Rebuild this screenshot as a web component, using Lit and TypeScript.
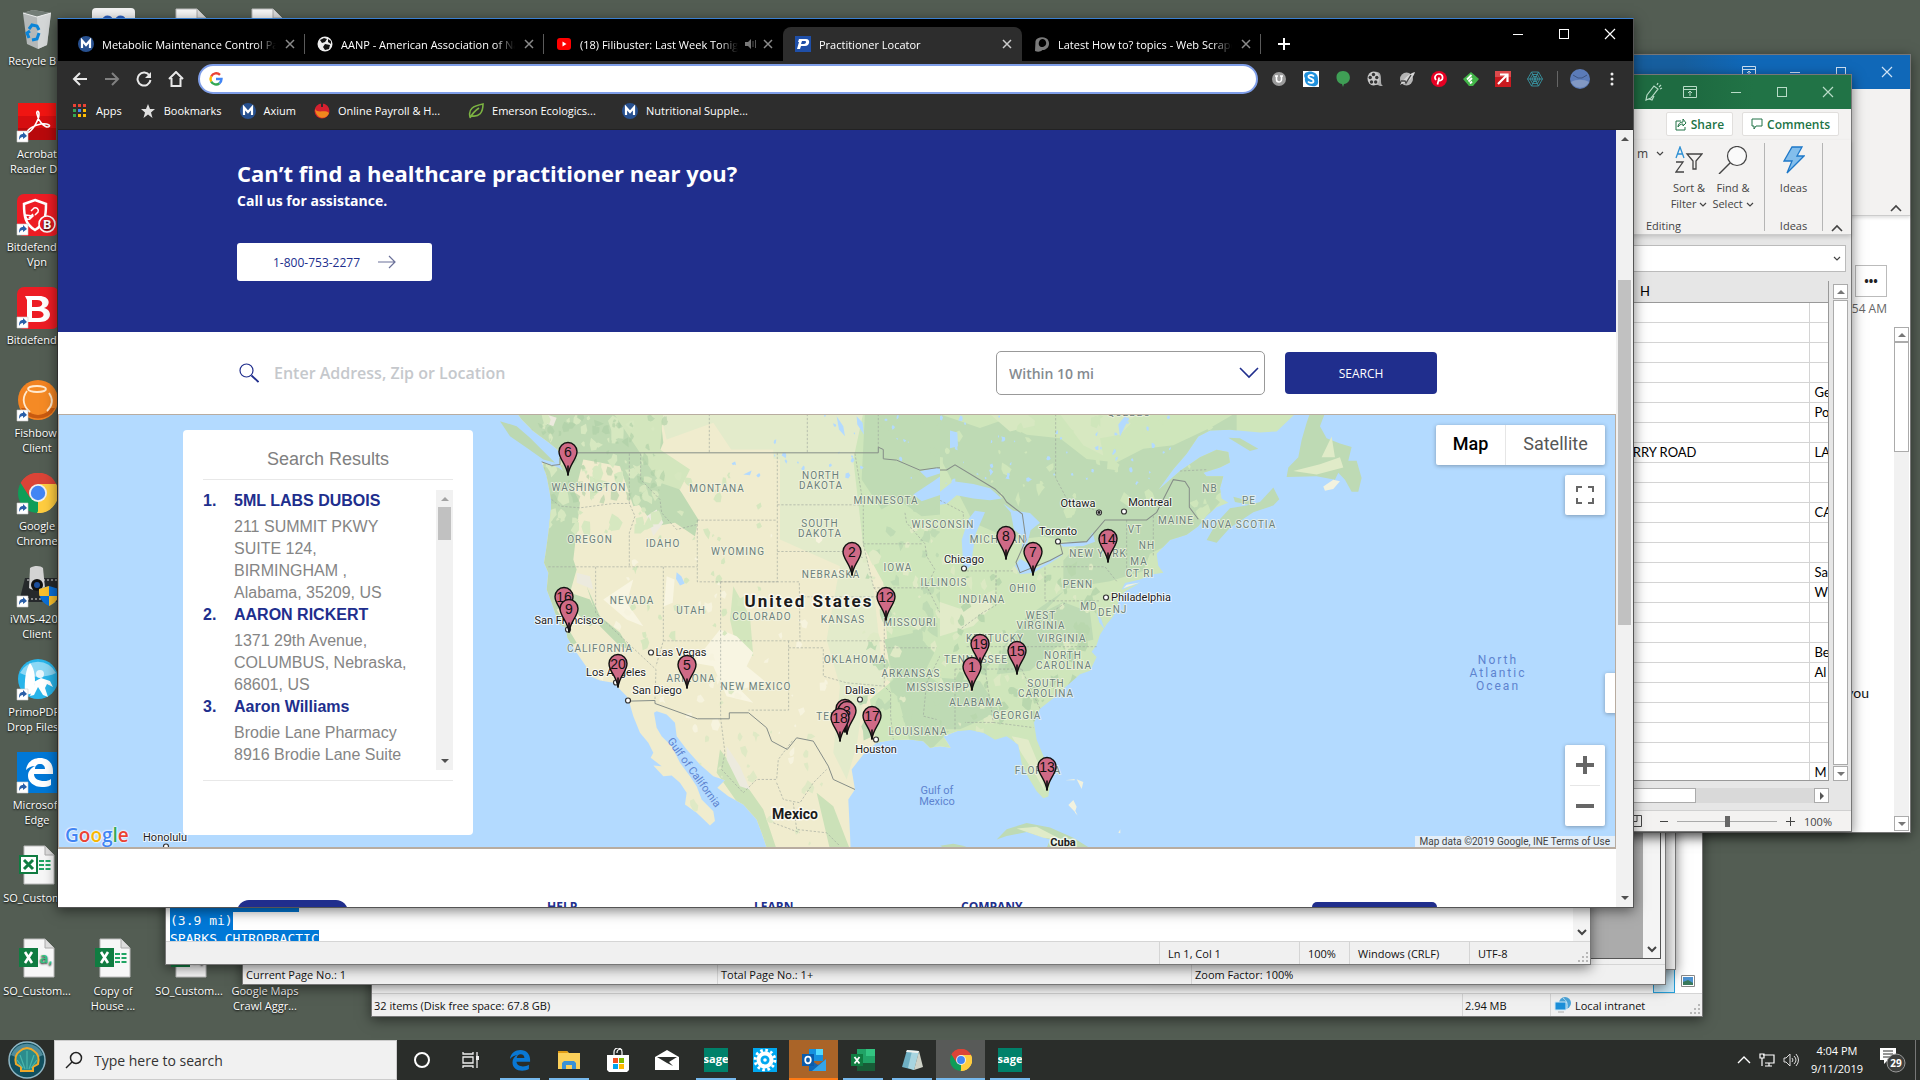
import { LitElement, html, svg, css } from "lit";
import { customElement } from "lit/decorators.js";

/* ---------- shared icon helper ---------- */
const icon = (w: number, h: number, body: unknown, cls = "") =>
  html`<svg class=${cls} width=${w} height=${h} viewBox="0 0 ${w} ${h}" aria-hidden="true" fill="none">${body}</svg>`;

const chevron = (dir: "up" | "down", c = "#444") =>
  icon(12, 8, dir === "down"
    ? svg`<path d="M2 2l4 4 4-4" stroke=${c} stroke-width="2"/>`
    : svg`<path d="M1 7l5-5 5 5" stroke=${c} stroke-width="1.6"/>`);
const tri = (dir: "up" | "down" | "right", c = "#505050") =>
  icon(8, 8, dir === "up" ? svg`<path d="M0 6l4-4 4 4z" fill=${c}/>`
    : dir === "down" ? svg`<path d="M0 2l4 4 4-4z" fill=${c}/>` : svg`<path d="M2 0l4 4-4 4z" fill=${c}/>`);

const winMin = icon(12, 12, svg`<path d="M1 6.500h10" stroke="currentColor"/>`);
const winMax = icon(12, 12, svg`<rect x="1.500" y="1.500" width="9" height="9" stroke="currentColor"/>`);
const winClose = icon(12, 12, svg`<path d="M1 1l10 10M11 1L1 11" stroke="currentColor" stroke-width="1.200"/>`);
const ribbonToggle = icon(14, 12, svg`<path d="M.5.5h13v11H.5zM.5 3.500h13M7 10V5M5 7l2-2 2 2" stroke="currentColor"/>`);
const grip = icon(12, 12, svg`<path d="M9 1h2v2H9zM5 5h2v2H5zM9 5h2v2H9zM1 9h2v2H1zM5 9h2v2H5zM9 9h2v2H9z" fill="#b8b8b8"/>`, "grip");

const mLogo = icon(16, 16, svg`<circle cx="8" cy="8" r="8" fill="#27508f"/><path d="M4 12V4.500L8 9l4-4.500V12" stroke="#fff" stroke-width="2.200"/>`);
const googleG = icon(16, 16, svg`
  <path d="M12 3.800A5.500 5.500 0 0 0 3.200 5.400" stroke="#ea4335" stroke-width="2.400"/>
  <path d="M3.200 5.400a5.500 5.500 0 0 0 0 5.200" stroke="#fbbc05" stroke-width="2.400"/>
  <path d="M3.200 10.600a5.500 5.500 0 0 0 8.300 1.600" stroke="#34a853" stroke-width="2.400"/>
  <path d="M11.500 12.200A5.500 5.500 0 0 0 13.500 8H8" stroke="#4285f4" stroke-width="2.400"/>`);

const chromeLogo = (s: number) => html`<svg width=${s} height=${s} viewBox="0 0 40 40" aria-hidden="true">
  <path d="M20 20L2.700 10A20 20 0 0 1 37.300 10z" fill="#db4437"/>
  <path d="M20 20L37.300 10A20 20 0 0 1 20 40z" fill="#ffcd40"/>
  <path d="M20 20L20 40A20 20 0 0 1 2.700 10z" fill="#0f9d58"/>
  <path d="M20 11h18.200A20 20 0 0 0 2.700 10l9.500 15z" fill="#db4437"/>
  <path d="M27.800 24.500L19 40A20 20 0 0 0 38.200 11H20z" fill="#ffcd40"/>
  <circle cx="20" cy="20" r="9" fill="#f1f1f1"/><circle cx="20" cy="20" r="7.200" fill="#4285f4"/></svg>`;
const edgeLogo = (s: number, c: string) => html`<svg width=${s} height=${s} viewBox="0 0 24 24" aria-hidden="true">
  <path d="M1 11C2 4 7 1 12.500 1 19 1 23 5.500 23 11.500V14H8.200c.2 3.600 3.600 5 7 5 2.500 0 4.600-.6 6.500-1.800v4.600C19.800 23 17 23.600 14.400 23.600 8 23.600 3.800 20 3.800 14.600c0-3.600 2-6.400 5.400-8C6 7 3 8.500 1 11zM8.400 9.800h8.400c0-2.600-1.500-4.200-4-4.200S8.700 7.300 8.400 9.800z" fill=${c}/></svg>`;

/* ---------- desktop shortcuts ---------- */
const sheet = svg`<path d="M9 1h21l9 9v29H9z" fill="#f7f7f7" stroke="#bbb"/><path d="M30 1v9h9" fill="#ddd" stroke="#aaa"/>`;
const art: Record<string, unknown> = {
  bin: svg`<path d="M8 5l10-3 18 3-4 32-9 4-11-5z" fill="#b4b8b8"/><path d="M8 5l14 4 14-4-18-3z" fill="#737d77"/><path d="M22 9l1 32 9-4 4-32z" fill="#d4d7d7"/><path d="M8 5l14 4 14-4" stroke="#eceeee" fill="none"/><path d="M14 21l3-4 5 1 2 4M24 25l-2 6-5 1M14 30l-2-5 3-2" stroke="#0a84d8" stroke-width="3" fill="none"/>`,
  acrobat: svg`<path d="M3 2h38v37H3z" fill="#b8090c"/><path d="M3 2h38v13H3z" fill="#f01512"/><path d="M3 15h38v12H3z" fill="#d60e10"/><path d="M12 32c5-1 12-13 12-19 0-4-3-3-2 0 1 7 7 13 11 13 4-1 0-4-7-3-6 1-14 5-14 9z" fill="none" stroke="#fff" stroke-width="1.600"/>`,
  vpn: svg`<rect x="2" width="42" height="42" rx="7" fill="#ed1c24"/><path d="M20 6l11 4c0 12-1 20-11 26C10 30 9 22 9 10z" fill="none" stroke="#fff" stroke-width="2.500"/><path d="M14 24l4-4m-2-3l3-3a3 3 0 0 1 4 4l-3 3m-2 1l-3 3a3 3 0 0 1-4-4z" stroke="#fff" stroke-width="1.500" fill="none"/><circle cx="32" cy="30" r="8" fill="#ed1c24" stroke="#fff" stroke-width="1.600"/><text x="32" y="35" text-anchor="middle" font-size="13" font-weight="700" fill="#fff">B</text>`,
  bit: svg`<rect x="2" width="42" height="42" rx="7" fill="#ed1c24"/><path fill-rule="evenodd" d="M10 9h14c12 0 12 10 5 12 9 2 8 14-4 14H12V13zM17 13v7h5c7 0 7-7 0-7zM17 24v7h6c8 0 7-7 0-7z" fill="#fff"/>`,
  fish: svg`<circle cx="23" cy="20" r="20" fill="#f28322"/><path d="M6 28a19 19 0 0 0 34 0z" fill="#c85a10"/><circle cx="23" cy="20" r="15" fill="#f58a25"/><ellipse cx="22" cy="9" rx="9" ry="3" fill="none" stroke="#ffe9cf" stroke-width="1.800"/><path d="M12 11c-6 8-3 16 3 21M34 13c5 7 3 13-2 18" fill="none" stroke="#ffe9cf" stroke-width="1.800"/>`,
  ivms: svg`<path d="M10 12h36v24H4z" fill="#26292b"/><path d="M12 14h34M8 33h34" stroke="#ddd" stroke-dasharray="2 2"/><path d="M15 2c5-3 11-2 13 0l2 20c-4 3-12 3-16 0z" fill="#d3d3d3"/><circle cx="22" cy="19" r="6" fill="#111"/><circle cx="22" cy="19" r="3" fill="#1b4e9c"/><path d="M34 20l10 3c0 9-3 14-10 17-7-3-10-8-10-17z" fill="#0b6fd6"/><path d="M34 20v10H24.500c-.5-2-.5-4-.5-7zM34 30h9.400c-1 5-5 8-9.400 10z" fill="#fbc02d"/>`,
  primo: svg`<circle cx="23" cy="20" r="20" fill="#29b5ea"/><path d="M5 14a20 20 0 0 1 36 0c-10 5-26 5-36 0z" fill="#8dd8f5"/><path d="M10 36C9 20 11 10 15 4c5 6 6 16 4 30z" fill="#fff"/><circle cx="25" cy="15" r="4" fill="#e9f7fd"/><path d="M17 24l9-5 9 3 3 6-6-3-2 4 3 9-5-2-5-8-4 8-4 1 5-13z" fill="#fff"/>`,
  edge: svg`<path d="M2 0h44v41H2z" fill="#0078d7"/><path d="M11 18C12 10 18 6 25 6c8 0 13 5 13 13v3H19c0 5 5 7 10 7 3 0 5-.6 7-2v6c-3 2-6 2-9 2-8 0-14-5-14-11 0-5 3-8 7-10-4 0-7 2-9 4zM20 17h10c0-3-2-5-5-5s-5 2-5 5z" fill="#fff"/>`,
  white: svg`<rect x="1" width="43" height="40" rx="4" fill="#f2f2f2"/><path d="M12 14c2-6 8-6 8 0M25 14c2-6 8-6 8 0" stroke="#2b5fc0" stroke-width="4" fill="none"/>`,
  file: sheet,
  xls: svg`${sheet}<path d="M24 16h12M24 20h12M24 24h12" stroke="#1fa463" stroke-width="2" stroke-dasharray="5 1.500"/><rect x="5" y="11" width="17" height="17" fill="#fff" stroke="#107c41" stroke-width="2"/><path d="M9 15l9 9M18 15l-9 9" stroke="#107c41" stroke-width="3"/>`,
  csv: svg`${sheet}<text x="31" y="25" text-anchor="middle" font-size="15" font-weight="600" fill="#33c481">a,</text><path d="M4 10h19v19H4z" fill="#107c41"/><path d="M10 14l7 11M17 14l-7 11" stroke="#fff" stroke-width="2.600"/>`,
  xlsx: svg`${sheet}<path d="M24 16h12M24 20h12M24 24h12" stroke="#1fa463" stroke-width="2" stroke-dasharray="5 1.500"/><path d="M4 10h19v19H4z" fill="#107c41"/><path d="M10 14l7 11M17 14l-7 11" stroke="#fff" stroke-width="2.600"/>`,
};
const shortcut = svg`<path d="M2 30h11v11H2z" fill="#fff" stroke="#ccc" stroke-width=".6"/><path d="M4 39c0-4 1-6 4-6V31l4 4-4 3v-2c-2 0-3 1-4 3z" fill="#2a5fa8"/>`;

type Item = [string, number, number, boolean, string[]];
const items: Item[] = [
  ["bin", 1, 1, false, ["Recycle Bin"]],
  ["white", 2, 1, false, []], ["file", 3, 1, false, []], ["file", 4, 1, false, []],
  ["acrobat", 1, 2, true, ["Acrobat", "Reader DC"]],
  ["vpn", 1, 3, true, ["Bitdefender", "Vpn"]],
  ["bit", 1, 4, true, ["Bitdefender"]],
  ["fish", 1, 5, true, ["Fishbowl", "Client"]],
  ["chrome", 1, 6, true, ["Google", "Chrome"]],
  ["ivms", 1, 7, true, ["iVMS-4200", "Client"]],
  ["primo", 1, 8, true, ["PrimoPDF -", "Drop Files..."]],
  ["edge", 1, 9, true, ["Microsoft", "Edge"]],
  ["xls", 1, 10, false, ["SO_Custom..."]],
  ["csv", 1, 11, false, ["SO_Custom..."]],
  ["xlsx", 2, 11, false, ["Copy of", "House ..."]],
  ["csv", 3, 11, false, ["SO_Custom..."]],
  ["file", 4, 11, false, ["Google Maps", "Crawl Aggr..."]],
];

/* ---------- map ---------- */
@customElement("practitioner-map")
export class PractitionerMap extends LitElement {
  static styles = css`
    :host { display: block; width: 100%; height: 100%; }
    svg { display: block; width: 100%; height: 100%; font-family: Roboto, sans-serif; }
    text { text-anchor: middle; dominant-baseline: central; paint-order: stroke; stroke-linejoin: round; }
    .state { font-size: 10px; letter-spacing: 1px; fill: #6c807b; stroke: #f4f6e6; stroke-width: 2px; stroke-opacity: .7; }
    .city { font-size: 11px; fill: #1c1c1c; stroke: #fff; stroke-width: 2px; stroke-opacity: .75; }
    .country { font-weight: 700; fill: #1b1b1b; stroke: #fff; stroke-width: 3px; stroke-opacity: .7; }
    .us { font-size: 17px; letter-spacing: 2px; }
    .mx { font-size: 14px; }
    .cu { font-size: 11px; }
    .sea { font-size: 11px; fill: #5d83cf; }
    .ocean { font-size: 12px; letter-spacing: 2px; fill: #5d83cf; }
    .num { font-family: "Liberation Sans", Arial, sans-serif; font-size: 14px; fill: #111; }
    .dash { fill: none; stroke: #9aa39a; stroke-width: 2.400; stroke-dasharray: 7 5; opacity: .75; }
    .line { fill: none; stroke: #858d88; stroke-width: 3; }
  `;

  private patches(seed: number, x0: number, y0: number, x1: number, y1: number, n: number, size: number) {
    let s = seed;
    const r = () => (s = (s * 16807) % 2147483647) / 2147483647;
    let d = "";
    for (let i = 0; i < n; i++) {
      const cx = x0 + r() * (x1 - x0), cy = y0 + r() * (y1 - y0), k = 5 + Math.floor(r() * 4), z = size * (0.3 + r());
      for (let j = 0; j < k; j++) {
        const a = (j / k) * 6.283, q = z * (0.35 + r() * 0.9);
        d += `${j ? "L" : "M"}${Math.round(cx + Math.cos(a) * q)} ${Math.round(cy + Math.sin(a) * q * 1.3)}`;
      }
      d += "z";
    }
    return d;
  }

  private states: [string, number, number][] = [
    ["WASHINGTON", 589, 488], ["MONTANA", 717, 489], ["NORTH", 821, 476], ["DAKOTA", 821, 486], ["MINNESOTA", 886, 501],
    ["WISCONSIN", 943, 525], ["SOUTH", 820, 524], ["DAKOTA", 820, 534], ["OREGON", 590, 540], ["IDAHO", 663, 544],
    ["WYOMING", 738, 552], ["NEBRASKA", 831, 575], ["IOWA", 898, 568], ["ILLINOIS", 944, 583], ["NEVADA", 632, 601],
    ["UTAH", 691, 611], ["COLORADO", 762, 617], ["KANSAS", 843, 620], ["MISSOURI", 910, 623], ["CALIFORNIA", 600, 649],
    ["ARIZONA", 691, 679], ["NEW MEXICO", 756, 687], ["OKLAHOMA", 855, 660], ["ARKANSAS", 911, 674], ["TEXAS", 834, 717],
    ["MISSISSIPPI", 940, 688], ["LOUISIANA", 918, 732], ["MICHIGAN", 998, 532], ["NEW YORK", 1098, 547], ["VT", 1135, 530],
    ["NH", 1147, 546], ["MA", 1139, 562], ["CT RI", 1140, 574], ["MAINE", 1176, 521], ["NB", 1210, 489], ["PE", 1249, 501],
    ["NOVA SCOTIA", 1239, 525], ["OHIO", 1023, 589], ["PENN", 1078, 585], ["INDIANA", 982, 600], ["MD", 1089, 607],
    ["DE", 1105, 613], ["NJ", 1120, 610], ["WEST", 1041, 616], ["VIRGINIA", 1041, 626], ["VIRGINIA", 1062, 639],
    ["KENTUCKY", 995, 639], ["TENNESSEE", 976, 660], ["NORTH", 1063, 656], ["CAROLINA", 1064, 666], ["SOUTH", 1046, 684],
    ["CAROLINA", 1046, 694], ["ALABAMA", 976, 703], ["GEORGIA", 1017, 716], ["FLORIDA", 1038, 771], ["QUEBEC", 1129, 413],
  ].map(([t, x, y]) => [t, x, t === "MICHIGAN" ? 540 : t === "NEW YORK" ? 554 : y] as [string, number, number]);
  private cities: [string, number, number, number, number][] = [
    ["San Francisco", 569, 621, 568, 630], ["Los Angeles", 616, 673, 616, 683],
    ["San Diego", 657, 691, 628, 701], ["Dallas", 860, 691, 860, 700], ["Houston", 876, 750, 876, 740],
    ["Chicago", 964, 560, 964, 569], ["Toronto", 1058, 532, 1058, 542], ["Ottawa", 1078, 504, 1099, 513],
    ["Montreal", 1150, 503, 1124, 512], ["Philadelphia", 1141, 598, 1106, 598], ["Honolulu", 165, 838, 166, 847],
    ["Las Vegas", 681, 653, 651, 653],
  ];
  private pins: [string, number, number][] = [
    ["6", 568, 452], ["2", 852, 552], ["12", 886, 597], ["16", 564, 597], ["9", 569, 609], ["20", 618, 664], ["5", 687, 665],
    ["", 845, 709], ["3", 847, 711], ["18", 840, 718], ["17", 872, 716], ["8", 1006, 536], ["7", 1033, 552], ["14", 1108, 539],
    ["19", 980, 644], ["15", 1017, 651], ["1", 972, 667], ["13", 1047, 767],
  ];

  private west = "M110 40L125 60 160 95 180 110 205 128 232 150 240 165 238 192 250 215 235 205 185 187 200 230 213 300 213 330 205 400 197 460 192 490 205 520 200 570 215 610 225 640 240 675 258 685 262 715 290 760 318 800 330 830 360 843 400 850 420 870 440 890 447 905 460 950 480 1000 505 1030 520 1060 512 1075 545 1100 520 1098 550 1130 575 1128 600 1150 620 1180 615 1215 650 1240 690 1278 705 1265 700 1235 665 1200 650 1160 630 1130 600 1090 575 1040 545 1010 530 985 522 940 530 935 560 945 585 970 590 1010 620 1050 660 1095 700 1130 735 1142 712 1165 745 1190 790 1215 830 1260 845 1300 862 1350 1112 1350 1110 1300 1105 1200 1125 1170 1115 1110 1150 1065 1190 1030 1230 1022 1290 1020 1330 1025 1350 1045 1380 1040 1412 1045 1390 1010 1445 990 1445 40z";
  private east = "M0 1195L60 1195 90 1192 130 1200 165 1220 200 1210 235 1235 245 1290 265 1330 290 1370 310 1390 325 1385 330 1350 320 1290 290 1220 282 1170 300 1130 340 1100 385 1060 420 1030 450 1020 470 980 455 965 470 945 480 915 500 885 520 862 540 810 555 790 600 765 545 785 555 765 600 755 640 740 670 735 655 715 650 680 690 640 740 625 775 600 800 570 830 545 865 532 845 520 840 490 850 455 800 455 790 445 840 430 870 415 865 385 830 378 780 400 720 440 655 495 700 435 740 390 775 340 810 322 870 320 960 328 1010 325 1070 270 0 270z";

  render() {
    const w5 = "translate(480 400) scale(.3333)";
    const e6 = "translate(940 320) scale(.3333 .3444)";
    return html`<svg viewBox="59 415 1556 433" preserveAspectRatio="xMidYMid slice" role="img" aria-label="Map of practitioners">
      <defs>
        <clipPath id="cw"><path d=${this.west}/></clipPath>
        <clipPath id="ce"><path d=${this.east}/></clipPath>
      </defs>
      <path d="M59 400h1556v460H59z" fill="#b3daff"/>
      <g transform=${w5}>
        <path d=${this.west} fill="#f0ecce"/>
        <path d="M60 65L110 80 150 115 185 150 225 190 190 180 140 145 90 110z" fill="#bcd8b2"/>
        <g clip-path="url(#cw)">
          <path d="M540 40H1200V160L1140 180 1150 430 1180 560 1213 860 1150 900 1130 1040 1100 1140 1060 1060 1080 860 1040 720 1080 500 900 420 900 180 760 160 700 70 560 120z" fill="#e3ebcb"/>
          <path d="M580 150H880V350H660V480H560L520 380 600 330z" fill="#f0ecce"/>
          <path d="M1150 40h300v1010h-260l-20-150 60-50-20-300-60-110-30-260z" fill="#cee6bb"/>
          <path d="M1155 40h290v300l-120 10-70-50-50 30-60-90z M1213 720l90-20 60 60-30 60 110 80v60l-90 90-60-10-50-190z" fill="#bfdbb4"/>
          <path d="M100 40h440l10 90-30 70 50 50-20 50-90 20-40-120-110-20-20 80-30 20-30-80z" fill="#bfdab3"/>
          <path d="M190 190l60 20 50 100-20 170 10 30-20 70 60 20 30 60-30 20-60-60-40 10 60 100-20 10-60-90-40-60z" fill="#bfdab3"/>
          <path d="M320 560l40 90 60 50 30 50-30-10-60-60zM465 300l80-110 60 90 50 80-10 50-60-40-60 10z" fill="#bfdab3"/>
          <path d="M720 1050l60 80 70 100 40 120h-50l-60-130-70-100zM1010 1180l50 40 50 130h-60z" fill="#cbe1b8"/>
          <path d="M400 40h150l-10 110 90 60-30 60-60-20zM760 560l50 90 10 120-50-20-20-90zM330 230l60 20-60 50z" fill="#d3e6bd"/>
          <path d="M720 690l50 20 50 50-20 40 60 50-80 20 40 40-80-20-40-90-60-10 40-50zM370 600l90-60-20 70 50 70-50-20zM560 530l24 10-6 70-26 10z" fill="#f8f5e2"/>
          <path d="M500 350l30-20 20 40-30 40zM290 520l40 10 10 40-50-20zM200 45l30 10-10 25-25-10zM740 1040l40 60 30 70-30-10-40-80z" fill="#eceade"/>
          <path d=${this.patches(31, 190, 50, 560, 420, 60, 16)} fill="#d6e8c0"/>
          <path d=${this.patches(73, 120, 50, 560, 300, 60, 12)} fill="#aecea5" opacity=".6"/>
          <path d=${this.patches(97, 460, 200, 860, 760, 46, 12)} fill="#d6e7bf"/>
          <path d=${this.patches(211, 350, 400, 1100, 1150, 46, 11)} fill="#f6f3de"/>
          <path d=${this.patches(401, 640, 860, 1100, 1340, 32, 12)} fill="#dfe9c5"/>
          <path d=${this.patches(577, 1150, 50, 1440, 1000, 60, 18)} fill="#bfdbb4"/>
          <path d=${this.patches(613, 1150, 350, 1440, 900, 36, 14)} fill="#dfeac6"/>
          <path d=${this.patches(811, 760, 45, 1300, 260, 26, 6)} fill="#b3daff"/>
          <path d="M590 518l14 12 10 22-14 6-12-20zM1070 50l20 30 5 30-18-20zM1130 50l18 20 4 35-20-30zM790 225l25-12-5 14zM1300 285l60-40 50-35 35 20v50l-60 5-60 20zM1320 215l50-10 30 10-60 20z" fill="#b3daff"/>
        </g>
        <path class="dash" d="M215 300L240 320 300 325 400 312 450 312M448 162V312L465 350 448 400V502M205 502H652M347 502V640L528 810 525 900M550 502V724L528 800M652 362V547H892M652 362H892M892 160V547M482 162V240L540 300 545 340 590 390 652 375M722 547V955M722 547H958L960 724M550 724H1213M926 724V932H805M926 745H1030V830L1100 850 1213 860M892 316H1145M892 456H1085L1150 475M958 592H1190M1125 162L1150 316V433L1180 560 1213 620V860L1232 880V950L1240 1020M1150 433H1330M1180 565H1345M1213 745H1370M1275 340L1280 370 1335 433 1340 470 1365 510 1340 560 1400 680 1385 760 1340 850 1330 950 1370 960M688 43V160M982 43V160M1195 43V143M722 955L735 1060 725 1110 790 1180 830 1140 890 1140 895 1080 940 1020M890 1150L910 1200 960 1210 1000 1150 1040 1110M940 1210L950 1290 1040 1300 1080 1340M880 1270L960 1300"/>
        <path class="line" d="M290 160H1195V143L1210 150V178L1250 182 1320 212 1370 205 1440 205M185 187L215 198 240 195V175M447 905L525 903 525 912 652 958H748V940H806L860 985 875 1025 922 1050 950 1015 1000 1025 1045 1100 1060 1140 1125 1170"/>
      </g>
      <g transform=${e6}>
        <path d=${this.east} fill="#cfe6bb"/>
        <g clip-path="url(#ce)">
          <path d="M0 275l120 40 60-20 80 40 100 10 80 60 90 10 80-40 90-10 110-50 80-45v200l-60 40-40 120-200 20-60 60-60 20-60-80-100-20-90 10-120-50L0 400zM500 560l160 0 40-90 60 0 80 60-80 90-130 60-20 50-100 30-130 20-60 60-20 80-60 80-60 30 20-90 80-90 90-60 0-90zM250 880l120-60 80 30 10 80-110 20-80 70-100 10 20-80zM0 1040l120 10 60 90-120 50H0z" fill="#bedab4"/>
          <path d="M0 820l60 20 60-30 40 20-60 60-100 30zM215 1210l50 10 30 70 20 80-30-50-40-60z" fill="#e2ebc9"/>
          <path d="M150 275h110l40 30-90 20zM360 275h240l-60 60-60 10 10 50-60-30z" fill="#d7e8c1"/>
          <path d=${this.patches(19, 0, 280, 820, 560, 46, 16)} fill="#cfe6bb"/>
          <path d=${this.patches(53, 0, 720, 480, 1180, 56, 16)} fill="#b9d7ae"/>
          <path d=${this.patches(89, 0, 700, 480, 1200, 46, 13)} fill="#dbe9c3"/>
          <path d=${this.patches(137, 0, 280, 700, 480, 46, 6)} fill="#b3daff"/>
        </g>
        <path d="M30 322l22 6 2 40-24 6zM535 305l20-25 10 10-25 50z" fill="#b3daff"/>
        <path d="M0 500L40 470 100 478 150 490 185 520 150 525 100 520 50 510 20 535 0 538zM70 715L65 640 85 580 105 555 135 560 108 620 100 665 92 715 75 730zM190 535L220 555 270 562 300 590 272 612 262 650 245 668 248 630 222 610 212 560zM225 715L240 695 290 722 345 690 370 682 330 708 280 735 240 740zM360 652L395 645 440 645 458 618 465 645 430 658 370 660zM470 850l14 20 10 30-16-20z" fill="#b3daff"/>
        <path d="M1110 272H1155L1140 310 1160 345 1200 360 1235 370 1225 410 1250 410 1265 460 1255 500 1235 500 1215 465 1195 445 1185 465 1130 455 1040 457 1045 430 1075 400 1085 350 1100 300zM800 640L830 648 870 605 940 560 1000 540 1018 522 1000 488 960 530 920 540 870 548 830 590zM865 343L900 345 955 375 930 382zM880 515l60 15-10 8-45-8zM170 1510L200 1480 260 1462 330 1475 400 1505 450 1535H320L330 1510 260 1488 200 1500zM0 1528l40-6 40 8-60 8z" fill="#bedab4"/>
        <path d="M1060 440l80-20 60-20 10 30-80 20zM1145 400l30-60 10 60zM230 1478l60-5 80 40-60-8z" fill="#e0ebc8"/>
        <path d="M1150 485l30-20 20 5-20 22-25 5zM385 1410l15-15 10 20-5 15zM405 1425l8 15-8-8zM376 1338l28-4v4zM410 1335l20 8-5 20zM535 1490l6-10v12zM560 770l40-6-50 16z" fill="#f2f2df"/>
        <path class="dash" d="M347 274V460L380 520 480 560M80 730H220M168 730V830L130 850 60 900M315 720V817H480M340 718H495L530 760M560 582V740M80 950H470M45 1015H245M45 1015V1195M135 1015L160 1170H75M160 1170L280 1185M245 1015L300 1130M250 880L320 860 380 820M640 570V690M0 525L70 560V600M720 440L800 436"/>
        <path class="line" d="M0 437H20L45 422 165 492 190 515 200 530 247 565 258 640 228 705 240 735 330 700 368 680 360 650 440 645 495 582H620L650 560 700 465 735 470 748 490V545L775 580"/>
      </g>
      ${this.states.map(([t, x, y]) => svg`<text class="state" x=${x} y=${y}>${t}</text>`)}
      ${this.cities.map(([t, x, y, dx, dy]) => svg`<circle cx=${dx} cy=${dy} r="2.500" fill="#fff" stroke="#333" stroke-width="1.200"/><text class="city" x=${x} y=${y}>${t}</text>`)}
      <circle cx="1099" cy="513" r="1.400" fill="#222"/>
      <text class="country us" x="809" y="601">United States</text>
      <text class="country mx" x="795" y="814">Mexico</text>
      <text class="country cu" x="1063" y="843">Cuba</text>
      <text class="sea" x="937" y="791">Gulf of</text><text class="sea" x="937" y="802">Mexico</text>
      <text class="sea" transform="translate(694 773) rotate(54)">Gulf of California</text>
      <text class="ocean" x="1498" y="660">North</text><text class="ocean" x="1498" y="673">Atlantic</text><text class="ocean" x="1498" y="686">Ocean</text>
      ${this.pins.map(([t, x, y]) => svg`<g transform="translate(${x} ${y})">
        <path d="M0 24C-1 13-9 8-9 0A9 9 0 0 1 9 0C9 8 1 13 0 24z" fill="#cf6a86" stroke="#111" stroke-width="1.400"/>
        <path d="M0 24V14" stroke="#111" stroke-width="1.600"/><text class="num" y="0">${t}</text></g>`)}
    </svg>`;
  }
}

/* ---------- locator page shown in the browser ---------- */
@customElement("locator-page")
export class LocatorPage extends LitElement {
  static styles = css`
    :host { display: flex; flex-direction: column; flex: 1; min-width: 0; overflow: hidden; background: #fff; font-family: "Open Sans", sans-serif; }
    * { box-sizing: border-box; }
    .wrap { width: 1200px; max-width: 100%; margin: 0 auto; }
    .hero { background: #202e8d; color: #fff; height: 202px; flex: none; padding-top: 25px; }
    h1 { margin: 0; font-size: 22px; line-height: 36px; }
    .hero p { margin: 0; font-size: 14px; line-height: 20px; font-weight: 700; }
    .phone { display: inline-flex; align-items: center; gap: 18px; margin-top: 32px; height: 38px; padding: 0 36px; background: #fff; border-radius: 3px; color: #202e8d; font-size: 12px; text-decoration: none; }
    .search { display: flex; align-items: center; flex: none; height: 82px; }
    .search svg { flex: none; }
    .field { display: flex; align-items: center; flex: 1; padding-left: 2px; gap: 15px; }
    .field input { flex: 1; border: 0; outline: 0; padding: 0; font: 600 16px "Open Sans", sans-serif; }
    .field input::placeholder { color: #c5c8cc; }
    .range { position: relative; width: 269px; height: 44px; margin-right: 20px; }
    .range select { appearance: none; width: 100%; height: 100%; border: 1px solid #999; border-radius: 5px; background: #fff; padding: 0 12px; font: 600 14px "Open Sans", sans-serif; color: #858a90; }
    .range svg { position: absolute; right: 6px; top: 16px; pointer-events: none; }
    .go { width: 152px; height: 42px; border: 0; border-radius: 4px; background: #202e8d; color: #fff; font: 12px "Open Sans", sans-serif; }
    .map { position: relative; flex: none; height: 435px; border: 1px solid #b8aca0; border-bottom-width: 2px; overflow: hidden; }
    .card { position: absolute; left: 124px; top: 15px; width: 290px; height: 405px; padding: 0 20px; background: #fff; border-radius: 4px; font-family: "Liberation Sans", Arial, sans-serif; }
    h2 { margin: 0; padding-top: 18px; height: 50px; border-bottom: 1px solid #e8e8e8; font-size: 18px; line-height: 22px; font-weight: 400; text-align: center; color: #808080; }
    .results { display: flex; height: 280px; margin: 10px 0; overflow: hidden; }
    ol { list-style: none; flex: 1; margin: 0; padding: 0; font-size: 16px; line-height: 22px; color: #858585; }
    li { display: grid; grid-template-columns: 31px 1fr; }
    li b { color: #202e8d; padding-bottom: 4px; }
    li span { grid-column: 2; }
    .bar { width: 17px; background: #f1f1f1; display: flex; flex-direction: column; align-items: center; justify-content: space-between; padding: 5px 0; }
    .bar i { width: 13px; height: 33px; background: #c1c1c1; margin: 4px 0 auto; }
    .rule { border-top: 1px solid #e8e8e8; }
    .ctl { position: absolute; display: flex; background: #fff; border-radius: 2px; box-shadow: 0 1px 4px rgba(0,0,0,.3); }
    .ctl button { border: 0; background: none; padding: 0; font: 18px Roboto, sans-serif; color: #565656; display: grid; place-items: center; flex: 1; }
    .ctl .on { color: #000; font-weight: 500; }
    .types { right: 10px; top: 10px; width: 169px; height: 40px; }
    .types button { line-height: 20px; padding-bottom: 2px; }
    .types .on { flex: none; width: 70px; border-right: 1px solid #e6e6e6; }
    .full { right: 10px; top: 60px; width: 40px; height: 40px; }
    .side { right: -30px; bottom: 134px; width: 40px; height: 40px; }
    .zoom { right: 10px; bottom: 21px; width: 40px; height: 81px; flex-direction: column; padding: 0 5px; }
    .zoom button + button { border-top: 1px solid #e6e6e6; }
    .terms { position: absolute; right: 0; bottom: -1px; height: 12px; padding: 0 5px; background: rgba(245,245,245,.75); font: 10px/12px Roboto, sans-serif; color: #444; }
    .terms a { color: inherit; text-decoration: none; }
    .brand { position: absolute; left: 6px; bottom: -2px; font: 600 19px/28px "Open Sans", sans-serif; text-shadow: 0 0 2px #fff, 0 0 2px #fff, 0 0 2px #fff; }
    .b { color: #4285f4; } .r { color: #ea4335; } .y { color: #f6b704; } .g { color: #34a853; }
    footer { display: grid; grid-template-columns: 310px 207px 207px 1fr auto; padding-top: 50px; font-size: 12px; line-height: 16px; font-weight: 700; color: #202e8d; }
    footer i { background: #202e8d; height: 30px; border-radius: 12px; width: 111px; margin-top: 1px; }
    footer i.wide { width: 125px; border-radius: 5px; margin-top: 3px; }
  `;
  private results: [string, string[]][] = [
    ["5ML LABS DUBOIS", ["211 SUMMIT PKWY", "SUITE 124,", "BIRMINGHAM ,", "Alabama, 35209, US"]],
    ["AARON RICKERT", ["1371 29th Avenue,", "COLUMBUS, Nebraska,", "68601, US"]],
    ["Aaron Williams", ["Brodie Lane Pharmacy", "8916 Brodie Lane Suite"]],
  ];
  render() {
    return html`
      <section class="hero"><div class="wrap">
        <h1>Can’t find a healthcare practitioner near you?</h1>
        <p>Call us for assistance.</p>
        <a class="phone" href="tel:18007532277">1-800-753-2277
          ${icon(18, 14, svg`<path d="M0 7h17M11 1l6 6-6 6" stroke="#6a7099" stroke-width="1.200"/>`)}</a>
      </div></section>
      <form class="search wrap" @submit=${(e: Event) => e.preventDefault()}>
        <label class="field">
          ${icon(20, 20, svg`<circle cx="7.500" cy="7.500" r="6.500" stroke="#202e8d" stroke-width="1.200"/><path d="M12.500 12.500l7 6.500" stroke="#202e8d" stroke-width="1.800"/>`)}
          <input type="text" aria-label="Location" placeholder="Enter Address, Zip or Location" />
        </label>
        <label class="range"><select aria-label="Distance"><option>Within 10 mi</option></select>
          ${icon(20, 12, svg`<path d="M1 1l9 9 9-9" stroke="#202e8d" stroke-width="1.600"/>`)}</label>
        <button class="go">SEARCH</button>
      </form>
      <section class="map">
        <practitioner-map></practitioner-map>
        <div class="card">
          <h2>Search Results</h2>
          <div class="results">
            <ol>${this.results.map(([n, a], i) => html`<li><b>${i + 1}.</b><b>${n}</b>${a.map((l) => html`<span>${l}</span>`)}</li>`)}</ol>
            <div class="bar">${tri("up", "#a3a3a3")}<i></i>${tri("down")}</div>
          </div>
          <div class="rule"></div>
        </div>
        <div class="brand"><span class="b">G</span><span class="r">o</span><span class="y">o</span><span class="b">g</span><span class="g">l</span><span class="r">e</span></div>
        <div class="ctl types"><button class="on">Map</button><button>Satellite</button></div>
        <div class="ctl full"><button aria-label="Full screen">${icon(18, 18, svg`<path d="M1 6V1h5M12 1h5v5M17 12v5h-5M6 17H1v-5" stroke="#666" stroke-width="2"/>`)}</button></div>
        <div class="ctl side"></div>
        <div class="ctl zoom"><button aria-label="Zoom in">${icon(18, 18, svg`<path d="M0 9h18M9 0v18" stroke="#666" stroke-width="4"/>`)}</button>
          <button aria-label="Zoom out">${icon(18, 18, svg`<path d="M0 9h18" stroke="#666" stroke-width="4"/>`)}</button></div>
        <div class="terms">Map data ©2019 Google, INE <a href="#terms">Terms of Use</a></div>
      </section>
      <footer class="wrap"><i></i><span>HELP</span><span>LEARN</span><span>COMPANY</span><i class="wide"></i></footer>`;
  }
}

/* ---------- browser window ---------- */
@customElement("browser-window")
export class BrowserWindow extends LitElement {
  static styles = css`
    :host { display: flex; flex-direction: column; background: #2d2d2d; font: 11px "Open Sans", sans-serif; color: #fff; }
    * { box-sizing: border-box; }
    button { border: 0; background: none; padding: 0; color: inherit; font: inherit; display: grid; place-items: center; flex: none; }
    .strip { display: flex; align-items: flex-end; background: #000; height: 42px; padding-left: 8px; flex: none; }
    .tab { display: flex; align-items: center; width: 239px; height: 34px; padding: 0 5px 0 12px; position: relative; }
    .tab .name { flex: 1; min-width: 0; margin: 0 4px 0 8px; white-space: nowrap; overflow: hidden; text-align: left; display: block; mask-image: linear-gradient(90deg, #000 88%, transparent); }
    .tab.short .name { margin-right: 6px; }
    .tab .x { width: 20px; height: 20px; color: #8a8a8a; }
    .tab.on { background: #2d2d2d; border-radius: 8px 8px 0 0; }
    .tab.on .x { color: #ccc; }
    .tab.sep::after { content: ""; position: absolute; right: 0; top: 7px; height: 20px; width: 1px; background: #5a5a5a; }
    .plus { width: 46px; height: 34px; }
    .ctl { margin-left: auto; display: flex; align-self: flex-start; }
    .ctl button { width: 46px; height: 29px; }
    .tools { display: flex; align-items: center; height: 36px; flex: none; padding: 0 5px 0 6px; }
    .tools > button { width: 32px; height: 32px; }
    .omni { flex: 1; display: flex; align-items: center; height: 30px; margin: 0 5px 0 6px; background: #fff; border: 2px solid #7f9ee8; border-radius: 15px; padding: 0 8px; }
    .omni input { flex: 1; border: 0; outline: 0; background: none; margin-left: 8px; }
    .split { width: 1px; height: 16px; background: #666; margin: 0 6px; }
    .marks { display: flex; align-items: center; height: 33px; flex: none; padding: 0 14px 5px; border-bottom: 1px solid #222; }
    .marks a { display: flex; align-items: center; gap: 8px; color: inherit; text-decoration: none; margin-right: 18px; white-space: nowrap; }
    .marks a.cut { width: 154px; margin: 0; }
    .body { display: flex; flex: 1; min-height: 0; }
    .scroll { width: 17px; flex: none; background: #f1f1f1; display: flex; flex-direction: column; align-items: center; padding: 5px 0; }
    .scroll i { width: 13px; flex: 0 0 45%; background: #c1c1c1; margin: 137px 0 auto; }
  `;
  render() {
    const x = icon(10, 10, svg`<path d="M1 1l8 8M9 1L1 9" stroke="currentColor" stroke-width="1.500"/>`);
    const tab = (ic: unknown, name: string, cls = "", extra: unknown = "") =>
      html`<div class="tab ${cls}">${ic}<button class="name">${name}</button>${extra}<button class="x" aria-label="Close tab">${x}</button></div>`;
    const globe = icon(16, 16, svg`<circle cx="8" cy="8" r="7.500" fill="#eee"/><path d="M3 4l4-2 3 1-2 3-3 1zM8 8l5 1-1 4-4 1-2-3zM11 3l3 2v3l-3-2z" fill="#111"/>`);
    const yt = icon(16, 16, svg`<rect x="1" y="2" width="14" height="12" rx="3" fill="#f00"/><path d="M6.500 5.500l4 2.500-4 2.500z" fill="#fff"/>`);
    const p = icon(16, 16, svg`<path d="M0 0h16v16H0z" fill="#1f4fa8"/><path fill-rule="evenodd" d="M4 3h7c5 0 4 8-2 7H6l-1 3H2l2-7H3zM7 5L6 8h3c2 0 3-3 1-3z" fill="#fff"/>`);
    const ring = icon(16, 16, svg`<path d="M1 15L1.500 5C3 0 13 0 14.500 5c2 5-2 9-6 9-2 2-5 2-7.500 1z" fill="#7a7a7a"/><path d="M5 6c1-4 6-4 7 0 1 3-2 5-4 5s-4-2-3-5z" fill="#000"/>`);
    const ext = [
      svg`<circle cx="8" cy="8" r="7" fill="#9b9b9b"/><path d="M5.500 4.500v4a2.500 2.500 0 0 0 5 0v-4M4 5h3M9 5h3" stroke="#fff" stroke-width="1.600"/>`,
      svg`<path d="M0 0h16v16H0z" fill="#fff"/><path d="M5 1c2-1 5 0 7 1 3 2 3 5 3 7 1 5-2 7-6 6-4 0-8-3-7-8C0 4 2 1 5 1z" fill="#1e90dc"/><path d="M11 5.500C9 3 5 4 5.500 6s5 1.500 5 4-4 2.500-5.500.5" stroke="#fff" stroke-width="1.800"/>`,
      svg`<path d="M8 0c9 0 9 12 1 13l-1 3-1-3C0 12-1 0 8 0z" fill="#3f9e55"/>`,
      svg`<path d="M7 1c7-1 7 4 7 8 0 3 0 5 2 6-2 0-4 0-5-1H7z" fill="#a9a9a9"/><ellipse cx="6.500" cy="7.500" rx="6" ry="7" fill="#c9c9c9"/><circle cx="6.500" cy="3.500" r="1.700" fill="#333"/><circle cx="3.200" cy="6.500" r="1.700" fill="#333"/><circle cx="9.800" cy="6.500" r="1.700" fill="#333"/><circle cx="4.500" cy="11" r="1.700" fill="#333"/><circle cx="8.700" cy="11" r="1.700" fill="#333"/>`,
      svg`<circle cx="7.500" cy="8" r="6.500" fill="#b4b4b4"/><path d="M1 14c2-4 9-12 15-13-1 5-8 12-12 11z" fill="#d6d6d6"/><path d="M2 10l4 0 1 2 5-8" stroke="#444" stroke-width="1.400"/>`,
      svg`<circle cx="8" cy="8" r="8" fill="#e60023"/><path d="M6.500 13.500L8.200 6.500M5 9C2.500 6 5 3 8 3c4.500 0 4.500 5.500 1.500 6.500-1 .3-2-.2-2.200-1" stroke="#fff" stroke-width="1.700"/>`,
      svg`<path d="M8 1l8 7-6 7H6L0 8z" fill="#43b649"/><path d="M4 8.500L8.500 4M5.500 10.500L9 7M7 12.500l2-2" stroke="#fff" stroke-width="1.800"/>`,
      svg`<path d="M0 0h16v16H0z" fill="#c91a1f"/><path d="M0 0h16v6H0z" fill="#dd4a4c"/><path d="M3 13l9-9M5 3.500h7.500V11" stroke="#fff" stroke-width="2.200"/>`,
      svg`<path d="M4.500 1h7l4 7-4 7h-7l-4-7z M5.500 3.500h5l2.500 4.500-2.500 4.500h-5L3 8z M6.500 5.500h3L11 8l-1.500 2.500h-3L5 8zM.5 8h15M4.500 1l7 14M11.500 1l-7 14" stroke="#3a9fae" stroke-width=".8"/>`,
    ];
    const link = (ic: unknown, t: string) => html`<a href="#" class=${t.endsWith("...") ? "cut" : ""}>${ic}${t}</a>`;
    return html`
      <div class="strip">
        ${tab(mLogo, "Metabolic Maintenance Control Panel", "sep")}
        ${tab(globe, "AANP - American Association of Naturopathic", "sep")}
        ${tab(yt, "(18) Filibuster: Last Week Tonight", "short", icon(14, 12, svg`<path d="M1 4h3l3-3v10L4 8H1z" fill="#777"/><path d="M9 3v6M11.500 2v8" stroke="#555"/>`))}
        ${tab(p, "Practitioner Locator", "on")}
        ${tab(ring, "Latest How to? topics - Web Scraper", "sep")}
        <button class="plus" aria-label="New tab">${icon(12, 12, svg`<path d="M6 0v12M0 6h12" stroke="#fff" stroke-width="2"/>`)}</button>
        <div class="ctl"><button aria-label="Minimize">${winMin}</button><button aria-label="Maximize">${winMax}</button><button aria-label="Close">${winClose}</button></div>
      </div>
      <div class="tools">
        <button aria-label="Back">${icon(16, 16, svg`<path d="M15 8H2M8 2L2 8l6 6" stroke="#e8e8e8" stroke-width="2"/>`)}</button>
        <button aria-label="Forward">${icon(16, 16, svg`<path d="M1 8h13M8 2l6 6-6 6" stroke="#808080" stroke-width="2"/>`)}</button>
        <button aria-label="Reload">${icon(16, 16, svg`<path d="M13.500 4.500A6.500 6.500 0 1 0 14.500 9" stroke="#e8e8e8" stroke-width="2"/><path d="M15 1v6H9z" fill="#e8e8e8"/>`)}</button>
        <button aria-label="Home">${icon(16, 16, svg`<path d="M1 8l7-7 7 7M3.500 7v8h9V7" stroke="#e8e8e8" stroke-width="2"/>`)}</button>
        <div class="omni">${googleG}<input type="text" aria-label="Address" /></div>
        ${ext.map((e) => html`<button aria-label="Extension">${icon(16, 16, e)}</button>`)}
        <div class="split"></div>
        <button aria-label="Profile">${icon(20, 20, svg`<circle cx="10" cy="10" r="10" fill="#5b7bb8"/><path d="M1 13c5-3 13-3 18 0a10 10 0 0 1-18 0z" fill="#8299c4"/><path d="M3 6l5 3h4l5-3" stroke="#3d5480"/>`)}</button>
        <button aria-label="Menu">${icon(4, 16, svg`<circle cx="2" cy="3" r="1.500" fill="#eee"/><circle cx="2" cy="8" r="1.500" fill="#eee"/><circle cx="2" cy="13" r="1.500" fill="#eee"/>`)}</button>
      </div>
      <div class="marks">
        ${link(icon(16, 14, svg`<path d="M1 0h3v3H1zM6 0h3v3H6zM11 0h3v3h-3z" fill="#ea4335"/><path d="M1 5h3v3H1zM1 10h3v3H1z" fill="#34a853"/><path d="M6 5h3v3H6z" fill="#4285f4"/><path d="M11 5h3v3h-3zM6 10h3v3H6zM11 10h3v3h-3z" fill="#fbbc05"/>`), "Apps")}
        ${link(icon(16, 16, svg`<path d="M8 1l2 5h5l-4 3.500L12.500 15 8 11.500 3.500 15 5 9.500 1 6h5z" fill="#e0e0e0"/>`), "Bookmarks")}
        ${link(mLogo, "Axium")}
        ${link(icon(16, 16, svg`<circle cx="8" cy="8" r="7.500" fill="#d5202f"/><path d="M1 6c3 5 10 0 14 4-2 7-13 7-14-4z" fill="#f0871d"/><path d="M8 0v4" stroke="#2d2d2d" stroke-width="2"/>`), "Online Payroll & H...")}
        ${link(icon(16, 16, svg`<path d="M2 14C0 6 5 3 15 1c0 9-4 13-11 12zM2 15C5 9 8 7 11 5" stroke="#7cb342" stroke-width="1.600"/>`), "Emerson Ecologics...")}
        ${link(mLogo, "Nutritional Supple...")}
      </div>
      <div class="body"><locator-page></locator-page>
        <div class="scroll">${tri("up")}<i></i>${tri("down")}</div></div>`;
  }
}

/* ---------- spreadsheet window ---------- */
@customElement("sheet-window")
export class SheetWindow extends LitElement {
  static styles = css`
    :host { display: flex; flex-direction: column; background: #e6e6e6; font: 11px "Open Sans", sans-serif; color: #444; }
    * { box-sizing: border-box; }
    button { border: 0; background: none; padding: 0; font: inherit; color: inherit; }
    .title { display: flex; justify-content: flex-end; height: 34px; background: linear-gradient(90deg, #1e6b41 78%, #217346 86%); color: #b9dcc8; flex: none; }
    .title button { width: 46px; display: grid; place-items: center; }
    .title button.pen { width: 26px; }
    .acts { display: flex; justify-content: flex-end; gap: 9px; padding: 3px 12px 0 0; background: #f3f2f1; height: 31px; flex: none; }
    .acts button { display: flex; align-items: center; gap: 4px; height: 24px; padding: 0 8px; background: #fff; border: 1px solid #e1dfdd; border-radius: 2px; color: #217346; font-weight: 600; font-size: 12px; }
    .ribbon { display: flex; justify-content: flex-end; background: #f3f2f1; height: 95px; flex: none; border-bottom: 1px solid #ccc; box-shadow: 0 2px 4px rgba(0,0,0,.15); }
    .group { display: flex; flex-direction: column; justify-content: space-between; border-right: 1px solid #b5b5b5; margin: 3px 0; padding: 3px 0 0; text-align: center; line-height: 16px; }
    .group > span { line-height: 10px; }
    .cmds { display: flex; justify-content: center; }
    .cmd { width: 44px; display: flex; flex-direction: column; align-items: center; gap: 6px; }
    .edit { width: 128px; }
    .edit .cmds { justify-content: flex-start; }
    .edit .sum { width: 30px; height: 16px; font-size: 12px; display: flex; align-items: center; gap: 8px; }
    .edit > span { padding-right: 74px; }
    .ideas { width: 58px; }
    .fold { width: 28px; display: flex; align-items: flex-end; justify-content: center; padding-bottom: 2px; }
    .cmd svg, .ideas svg { flex: none; }
    .formula { height: 27px; margin: 10px 5px 9px 0; background: #fff; border: 1px solid #bbb; display: flex; justify-content: flex-end; align-items: center; padding-right: 4px; flex: none; }
    .main { display: flex; flex: 1; min-height: 0; }
    .grid { flex: 1; overflow: hidden; display: flex; flex-direction: column; border-right: 1px solid #999; border-bottom: 1px solid #999; margin-right: 4px; }
    table { border-collapse: collapse; width: 100%; table-layout: fixed; font: 13px Lato, sans-serif; color: #000; background: #fff; }
    th { background: #e6e6e6; font-weight: 400; height: 21px; padding: 0; border-bottom: 1px solid #999; }
    .h { text-align: right; padding-right: 159px; }
    td { height: 20px; padding: 0; border: 1px solid #d4d4d4; border-left: 0; border-top: 0; white-space: nowrap; overflow: hidden; line-height: 18px; }
    td:first-child { text-align: right; padding-right: 112px; }
    td:last-child { padding-left: 5px; border-right: 0; }
    .last { width: 19px; }
    .v { width: 15px; margin-right: 3px; display: flex; flex-direction: column; gap: 1px; padding-top: 3px; }
    .box { width: 15px; height: 15px; background: #fff; border: 1px solid #ababab; display: grid; place-items: center; flex: none; }
    .v i { flex: 1; background: #fff; border: 1px solid #ababab; }
    .hs { display: flex; height: 15px; margin: 7px 22px 7px 0; background: #d9d9d9; flex: none; justify-content: flex-end; }
    .hs i { flex: 1; background: #fff; border: 1px solid #ababab; margin-right: 118px; }
    .status { display: flex; align-items: center; justify-content: flex-end; gap: 9px; height: 21px; padding-right: 19px; background: #f3f2f1; border-top: 1px solid #d0d0d0; flex: none; }
    .status input { width: 100px; height: 12px; margin: 0; appearance: none; background: linear-gradient(#aaa, #aaa) center / 100% 1px no-repeat; }
    .status input::-webkit-slider-thumb { appearance: none; width: 5px; height: 11px; background: #666; }
  `;
  render() {
    const last: Record<number, string> = { 4: "Ge", 5: "Po", 7: "LA", 10: "CA", 13: "Sa", 14: "W", 17: "Be", 18: "Al", 23: "M" };
    const down = icon(8, 6, svg`<path d="M1 1l3 3 3-3" stroke="#444" stroke-width="1.200"/>`);
    return html`
      <div class="title">
        <button class="pen" aria-label="Pen">${icon(18, 20, svg`<path d="M2 13L9 4l4 3-7 9-5 2zM4 17l3 1 2-4M12 3l1-2M14 5l2-2M15 7l2-1" stroke="currentColor" stroke-width="1.200"/>`)}</button>
        <button aria-label="Ribbon options">${ribbonToggle}</button><button aria-label="Minimize">${winMin}</button>
        <button aria-label="Maximize">${winMax}</button><button aria-label="Close">${winClose}</button></div>
      <div class="acts">
        <button>${icon(12, 13, svg`<path d="M6 3H1v9h9V9M3 9c0-3 2-5 5-5V1l3 4-3 3V6C6 6 4 7 3 9z" stroke="#217346"/>`)}Share</button>
        <button>${icon(12, 12, svg`<path d="M1 1h10v7H5l-2 3V8H1z" stroke="#217346"/>`)}Comments</button></div>
      <div class="ribbon">
        <div class="group edit"><div class="cmds">
          <button class="sum">m ${down}</button>
          <button class="cmd">${icon(28, 28, svg`<path d="M1 12L5 1l4 11M2 8h6" stroke="#2b8fd4" stroke-width="1.300"/><path d="M1 16h7L1 26h8M12 8h15l-6 7v8h-3v-8z" stroke="#444" stroke-width="1.300"/>`)}<span>Sort &amp;<br />Filter ${down}</span></button>
          <button class="cmd">${icon(30, 28, svg`<circle cx="19" cy="10" r="9.500" fill="#fafafa" stroke="#444" stroke-width="1.200"/><path d="M12 17L1 28" stroke="#444" stroke-width="1.400"/>`)}<span>Find &amp;<br />Select ${down}</span></button>
        </div><span>Editing</span></div>
        <div class="group ideas"><div class="cmds"><button class="cmd">${icon(22, 28, svg`<path d="M9 1h10l-5 9h7L4 27l5-12H1z" fill="#83beec" stroke="#1e78c8" stroke-width="1.300"/>`)}<span>Ideas</span></button></div><span>Ideas</span></div>
        <button class="fold" aria-label="Collapse ribbon">${chevron("up")}</button>
      </div>
      <div class="formula">${down}</div>
      <div class="main">
        <div class="grid"><table>
          <colgroup><col /><col class="last" /></colgroup>
          <thead><tr><th class="h">H</th><th></th></tr></thead>
          <tbody>${Array.from({ length: 24 }, (_, i) => html`<tr><td>${i === 7 ? "BERRY ROAD" : ""}</td><td>${last[i] ?? ""}</td></tr>`)}</tbody>
        </table></div>
        <div class="v"><span class="box">${tri("up", "#777")}</span><i></i><span class="box">${tri("down", "#777")}</span></div>
      </div>
      <div class="hs"><i></i><span class="box">${tri("right", "#555")}</span></div>
      <div class="status">${icon(14, 12, svg`<path d="M.5.5h13v11H.5zM5 .5v6M9 .5v6M1 6.500h8" stroke="#444"/>`)}<span></span>
        ${icon(8, 8, svg`<path d="M0 4.500h8" stroke="#444"/>`)}<input type="range" aria-label="Zoom" value="50" />${icon(9, 9, svg`<path d="M0 4.500h9M4.500 0v9" stroke="#444"/>`)}<span>100%</span></div>`;
  }
}

/* ---------- desktop ---------- */
@customElement("app-root")
export class AppRoot extends LitElement {
  static styles = css`
    :host { display: flex; flex-direction: column; height: 100vh; overflow: hidden; background: #535d53; font: 11px "Open Sans", sans-serif; color: #111; }
    * { box-sizing: border-box; }
    button { border: 0; background: none; padding: 0; font: inherit; color: inherit; }
    .desk { position: relative; flex: 1; min-height: 0; overflow: hidden; }
    .icons { display: grid; grid-template-columns: repeat(4, 76px); grid-auto-rows: 93px; padding-top: 8px; margin-left: -1px; }
    .short { display: flex; flex-direction: column; align-items: center; gap: 3px; color: #fff; line-height: 15px; text-shadow: 0 1px 2px #000; white-space: nowrap; width: 76px; height: 86px; text-decoration: none; text-align: center; }
    .win { position: absolute; box-shadow: 0 3px 12px rgba(0,0,0,.5); border: 1px solid #777; }
    .mail { left: 60%; right: 9px; top: 54px; bottom: 207px; background: #fff; display: flex; flex-direction: column; align-items: stretch; }
    .mail .top { height: 34px; background: linear-gradient(90deg, #175f9f 70%, #1068b8 78%); color: #cfe3f5; display: flex; justify-content: flex-end; flex: none; }
    .mail .top button { width: 46px; display: grid; place-items: center; }
    .mail .rib { height: 127px; background: #f3f2f1; border-bottom: 1px solid #ccc; display: flex; align-items: flex-end; justify-content: flex-end; padding: 0 8px 3px; flex: none; box-shadow: 0 2px 3px rgba(0,0,0,.12); }
    .mail .msg { flex: 1; display: flex; justify-content: flex-end; min-height: 0; }
    .mail .txt { display: flex; flex-direction: column; align-items: flex-end; padding: 49px 7px 0 0; width: 60px; font-size: 12px; color: #666; }
    .mail .more { width: 32px; height: 32px; border: 1px solid #bbb; font-weight: 700; color: #222; }
    .mail .txt span { line-height: 24px; white-space: nowrap; }
    .mail .txt .you { margin: auto 18px 127px 0; color: #111; font: 14px/24px Lato, sans-serif; }
    .vbar { width: 15px; display: flex; flex-direction: column; background: #f1f1f1; margin: 111px 1px 1px 0; }
    .box { width: 15px; height: 15px; background: #fff; border: 1px solid #ababab; display: grid; place-items: center; flex: none; }
    .vbar i { height: 110px; background: #fff; border: 1px solid #ababab; margin-bottom: auto; }
    .sheet { left: 60%; right: 68px; top: 74px; bottom: 208px; }
    .files { left: 371px; right: 217px; top: 70%; bottom: 23px; background: #fff; display: flex; flex-direction: column; justify-content: flex-end; }
    .views { display: flex; justify-content: flex-end; padding: 0 7px; gap: 6px; height: 25px; align-items: center; }
    .views b { width: 22px; height: 24px; background: #cce8f6; border: 1px solid #26a0da; }
    .bar { display: flex; background: #f0f0f0; border-top: 1px solid #d5d5d5; flex: none; }
    .bar span { border-left: 1px solid #d5d5d5; display: flex; align-items: center; white-space: nowrap; gap: 4px; position: relative; }
    .bar span:first-child { border: 0; flex: 1; }
    .bar svg.grip { position: absolute; right: 1px; bottom: 1px; }
    .files .bar { height: 23px; }
    .files .bar span { padding-left: 2px; }
    .c88 { width: 88px; } .c152 { width: 152px; }
    .strip { left: 60%; right: 244px; top: 70%; bottom: 70px; background: #ececec; }
    .preview { left: 242px; right: 254px; top: 70%; bottom: 55px; background: #f0f0f0; display: flex; flex-direction: column; }
    .preview .view { flex: 1; margin: 0 4px 5px 0; background: #ababab; border: 1px solid #555; display: flex; justify-content: flex-end; align-items: stretch; }
    .sb { width: 17px; background: #f4f4f4; display: flex; align-items: flex-end; justify-content: center; padding-bottom: 5px; }
    .preview .bar { height: 20px; }
    .preview .bar span { padding-left: 3px; }
    .c474 { width: 474px; }
    .note { left: 165px; right: 329px; top: 70%; bottom: 75px; background: #fff; display: flex; flex-direction: column; }
    .note .text { flex: 1; min-height: 0; display: flex; justify-content: space-between; }
    .lines { display: flex; flex-direction: column; justify-content: flex-end; align-items: flex-start; margin-left: 4px; overflow: hidden; font: 13px/18px "DejaVu Sans Mono", monospace; color: #fff; }
    .lines span { background: #0078d7; flex: none; height: 18px; }
    .lines span:first-child { width: 129px; }
    .lines span:last-child { height: 11px; overflow: hidden; }
    .note .bar { height: 23px; }
    .note .bar span { padding-left: 8px; }
    .c140 { width: 140px; } .c50 { width: 50px; } .c120 { width: 120px; } .c121 { width: 121px; }
    .browser { left: 57px; right: 286px; top: 18px; bottom: 132px; border-color: #3a7fd0 #555 #555 #2d2d2d; }
    .task { display: flex; height: 40px; background: #2a2d2a; color: #fff; flex: none; }
    .start { width: 54px; display: grid; place-items: center; }
    .find { display: flex; align-items: center; gap: 11px; width: 343px; background: #f1f1f1; border: 1px solid #ccc; padding: 0 10px; }
    .find input { border: 0; outline: 0; background: none; flex: 1; min-width: 0; padding: 0; font: 14px "Open Sans", sans-serif; }
    .find input::placeholder { color: #333; }
    .app { width: 49px; display: grid; place-items: center; }
    .app.open { background: linear-gradient(#76b9ed, #76b9ed) center bottom / 40px 2px no-repeat; }
    .app.ol { background: linear-gradient(#ff7a14, #ff7a14) bottom / 100% 2px no-repeat, #aa6428; }
    .app.cr { background: linear-gradient(#76b9ed, #76b9ed) bottom / 100% 2px no-repeat, #585a58; }
    .tray { margin-left: auto; display: flex; align-items: center; gap: 8px; }
    .time { text-align: center; line-height: 18px; margin: 0 8px 0 4px; }
    .peek { width: 5px; border-left: 1px solid #777; align-self: stretch; }
  `;
  render() {
    const sage = icon(24, 24, svg`<path d="M0 0h24v24H0z" fill="#00816a"/><text x="12" y="15" text-anchor="middle" font-size="11" font-weight="700" fill="#fff">sage</text>`);
    const apps: [string, string, unknown][] = [
      ["Cortana", "", icon(18, 18, svg`<circle cx="9" cy="9" r="7" stroke="#fff" stroke-width="2"/>`)],
      ["Task view", "", icon(18, 16, svg`<path d="M1 0v2h10V0M1 16v-2h10v2M1 5h10v6H1zM15 0v16" stroke="#eee" stroke-width="1.300"/><path d="M14 4h3v4h-3z" fill="#eee"/>`)],
      ["Edge", "open", edgeLogo(22, "#0a78d4")],
      ["Files", "open", icon(24, 20, svg`<path d="M1 1h9l2 2h11v16H1z" fill="#fbd05a"/><path d="M1 1h9l1 2H1z" fill="#e09c15"/><path d="M5 19v-6l2-2h10l2 2v6h-4v-4H9v4z" fill="#3a91d6"/>`)],
      ["Store", "", icon(24, 24, svg`<path d="M8 7V4a4 4 0 0 1 8 0v3M11 5V4a3 3 0 0 1 5-2" stroke="#fff" stroke-width="1.200"/><path d="M1 7h22v15l-2 2H3l-2-2z" fill="#fff"/><path d="M7 10h5v5H7z" fill="#f25022"/><path d="M13 10h5v5h-5z" fill="#7fba00"/><path d="M7 16h5v5H7z" fill="#00a4ef"/><path d="M13 16h5v5h-5z" fill="#ffb900"/>`)],
      ["Mail", "", icon(24, 20, svg`<path d="M0 7l12-7 12 7v13H0z" fill="#fff"/><path d="M2 7h20l-8 5 4 4-6-3z" fill="#2a2d2a"/>`)],
      ["Sage", "open", sage],
      ["Settings", "", icon(24, 24, svg`<path d="M0 0h24v24H0z" fill="#00a8f0"/><circle cx="12" cy="12" r="6.500" stroke="#fff" stroke-width="4"/><circle cx="12" cy="12" r="9.800" stroke="#fff" stroke-width="3" stroke-dasharray="2.566 2.566"/><circle cx="12" cy="12" r="1.800" fill="#fff"/>`)],
      ["Outlook", "ol", icon(24, 22, svg`<path d="M7 0h14v12H7z" fill="#1490df"/><path d="M14 0h7v6h-7z" fill="#50d9ff"/><path d="M7 10l9 6 8-6v12H7z" fill="#1066b5"/><path d="M24 10v12H10z" fill="#35a5e8"/><path d="M0 5h12v12H0z" fill="#0a5bab"/><ellipse cx="6" cy="11" rx="2.800" ry="3.300" stroke="#fff" stroke-width="1.700"/>`)],
      ["Excel", "open", icon(24, 22, svg`<path d="M6 0h18v22H6z" fill="#21a366"/><path d="M15 0h9v7h-9z" fill="#33c481"/><path d="M6 14h18v8H6z" fill="#185c37"/><path d="M0 5h12v12H0z" fill="#107c41"/><path d="M3.500 8l5 6.500M8.500 8l-5 6.500" stroke="#fff" stroke-width="1.800"/>`)],
      ["Notepad", "open", icon(24, 22, svg`<path d="M7 1l12 1-5 19-12-3z" fill="#6fb0c4"/><path d="M12 2l7 0-5 19-6-2z" fill="#a8d5e0"/><path d="M19 2l4 16-9 3z" fill="#cfd3c8"/><path d="M7 1l12 1-1 2-12-1z" fill="#f2f2ee"/>`)],
      ["Chrome", "cr", chromeLogo(22)],
      ["Sage", "open", sage],
    ];
    return html`
      <main class="desk">
        <div class="icons">${items.map(([k, c, r, s, l]) => html`<a class="short" href="#" style="grid-column:${c};grid-row:${r}">
          ${k === "chrome"
            ? html`<svg width="44" height="42" viewBox="0 0 44 42" aria-hidden="true"><g transform="translate(3 0)">${chromeLogo(40)}</g>${shortcut}</svg>`
            : html`<svg width="44" height="42" viewBox="0 0 44 42" aria-hidden="true">${art[k]}${s ? shortcut : ""}</svg>`}
          <span>${l.map((t, i) => html`${i ? html`<br />` : ""}${t}`)}</span></a>`)}</div>

        <section class="win files">
          <div class="views"><b></b>${icon(14, 12, svg`<path d="M.5.5h13v11H.5z" fill="#fff" stroke="#888"/><path d="M2 2h10v8H2z" fill="#4d92d0"/><path d="M2 7l5-2 5 3v2H2z" fill="#39795c"/>`)}</div>
          <div class="bar"><span>32 items (Disk free space: 67.8 GB)</span><span class="c88">2.94 MB</span>
            <span class="c152">${icon(18, 16, svg`<circle cx="12" cy="6" r="6" fill="#4aa3d8"/><path d="M10 1c3 2 5 5 4 10" stroke="#bfe2f5"/><path d="M2 5h11v8H2z" fill="#1d8fd8" stroke="#cfe8f5"/><path d="M5 15h6" stroke="#aaa"/>`)}Local intranet${grip}</span></div>
        </section>
        <section class="win strip"></section>
        <section class="win preview">
          <div class="view"><div class="sb">${chevron("down")}</div></div>
          <div class="bar"><span>Current Page No.: 1</span><span class="c474">Total Page No.: 1+</span><span class="c474">Zoom Factor: 100%</span></div>
        </section>
        <section class="win note">
          <div class="text"><div class="lines"><span></span><span>(3.9 mi)</span><span>SPARKS CHIROPRACTIC</span></div><div class="sb">${chevron("down")}</div></div>
          <div class="bar"><span></span><span class="c140">Ln 1, Col 1</span><span class="c50">100%</span><span class="c120">Windows (CRLF)</span><span class="c121">UTF-8${grip}</span></div>
        </section>

        <section class="win mail">
          <div class="top"><button aria-label="Ribbon options">${ribbonToggle}</button><button aria-label="Minimize">${winMin}</button><button aria-label="Maximize">${winMax}</button><button aria-label="Close">${winClose}</button></div>
          <div class="rib">${chevron("up")}</div>
          <div class="msg"><div class="txt"><button class="more" aria-label="More">•••</button><span>54 AM</span><span class="you">you</span></div>
            <div class="vbar"><span class="box">${tri("up", "#777")}</span><i></i><span class="box">${tri("down", "#777")}</span></div></div>
        </section>
        <sheet-window class="win sheet"></sheet-window>
        <browser-window class="win browser"></browser-window>
      </main>
      <nav class="task">
        <button class="start" aria-label="Start">${icon(38, 38, svg`<circle cx="19" cy="19" r="18" fill="#12505f" stroke="#8fb6c4" stroke-width="1.500"/><path d="M3 14a17 17 0 0 1 32 0c-10 5-22 5-32 0z" fill="#4f8b9b"/><path d="M13 30v-4l-5-3c-2-8 1-11 4-13l3-2 4-1 4 1 3 2c3 2 6 5 4 13l-5 3v4z" fill="#2b8c8c" stroke="#f0a828" stroke-width="2"/><path d="M19 28V10M17 28l-5-14M21 28l5-14M15 27l-6-8M23 27l6-8" stroke="#49b6ab" stroke-width="1.200"/>`)}</button>
        <label class="find">${icon(18, 18, svg`<circle cx="11" cy="7" r="5.500" stroke="#222" stroke-width="1.500"/><path d="M7 11l-6 6" stroke="#222" stroke-width="1.500"/>`)}<input type="text" aria-label="Search" placeholder="Type here to search" /></label>
        ${apps.map(([n, c, i]) => html`<button class="app ${c}" aria-label=${n}>${i}</button>`)}
        <div class="tray">
          ${icon(14, 10, svg`<path d="M1 8l6-6 6 6" stroke="#fff" stroke-width="1.400"/>`)}
          ${icon(16, 14, svg`<path d="M4 2h11v8H6M10 10v3M6 13h7M1 1h4v4H1zM3 5v8" stroke="#fff" stroke-width="1.200"/>`)}
          ${icon(16, 14, svg`<path d="M1 5h2l4-4v12L3 9H1zM9 5q2 2 0 4M11 3q4 4 0 8M13 1q5 6 0 12" stroke="#ddd"/>`)}
          <div class="time">4:04 PM<br />9/11/2019</div>
          ${icon(28, 26, svg`<path d="M1 1h16v12H9l-4 4v-4H1z" fill="#fff"/><path d="M4 4h10M4 7h10M4 10h7" stroke="#2a2d2a"/><circle cx="17" cy="16" r="9" fill="#3e403e" stroke="#999"/><text x="17" y="20" text-anchor="middle" font-size="10" font-weight="700" fill="#fff">29</text>`)}
          <span class="peek"></span>
        </div>
      </nav>`;
  }
}
